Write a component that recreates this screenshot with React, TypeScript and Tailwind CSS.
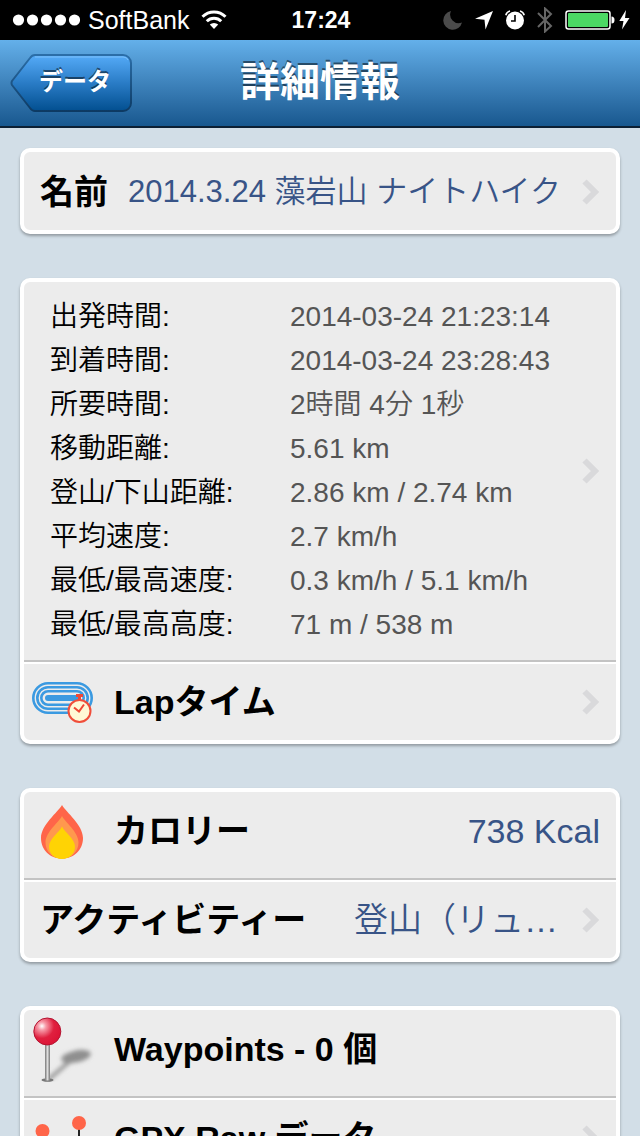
import type { ReactNode } from 'react'

const details = [
  { label: '出発時間:', value: '2014-03-24 21:23:14' },
  { label: '到着時間:', value: '2014-03-24 23:28:43' },
  { label: '所要時間:', value: '2時間 4分 1秒' },
  { label: '移動距離:', value: '5.61 km' },
  { label: '登山/下山距離:', value: '2.86 km / 2.74 km' },
  { label: '平均速度:', value: '2.7 km/h' },
  { label: '最低/最高速度:', value: '0.3 km/h / 5.1 km/h' },
  { label: '最低/最高高度:', value: '71 m / 538 m' },
]

function StatusBar() {
  return (
    <div className="grid h-10 shrink-0 grid-cols-[1fr_auto_1fr] items-center bg-black pr-2.5 pl-3 text-white">
      <div className="flex items-center">
        {/* Signal */}
        <svg width="68" height="12" viewBox="0 0 68 12" fill="currentColor" aria-hidden="true">
          <circle cx="6.5" cy="6" r="5.6" />
          <circle cx="20.5" cy="6" r="5.6" />
          <circle cx="34.5" cy="6" r="5.6" />
          <circle cx="48.5" cy="6" r="5.6" />
          <circle cx="62.5" cy="6" r="5.6" />
        </svg>
        <span className="ml-2 text-[25px] leading-10">SoftBank</span>
        {/* Wi-Fi */}
        <svg className="ml-3" width="26" height="20" viewBox="0 0 26 20" aria-hidden="true">
          <path d="M1.5 6.8a16.3 16.3 0 0 1 23 0" fill="none" stroke="currentColor" strokeWidth="3" />
          <path d="M5.8 11.2a10.2 10.2 0 0 1 14.4 0" fill="none" stroke="currentColor" strokeWidth="3" />
          <path d="M13 19l-4.2-4.4a6 6 0 0 1 8.400 0z" fill="currentColor" />
        </svg>
      </div>
      <span className="text-[23px] font-bold leading-10">17:24</span>
      <div className="flex items-center justify-end">
        {/* Do not disturb */}
        <svg width="20" height="20" viewBox="0 0 20 20" aria-hidden="true">
          <path d="M8 1A9.500 9.500 0 1 0 19 12.600A8.600 8.600 0 0 1 8 1z" fill="#4a4a4a" />
        </svg>
        {/* Location */}
        <svg className="ml-3" width="18" height="19" viewBox="0 0 18 19" fill="currentColor" aria-hidden="true">
          <path d="M18 0L10.500 18.500L9.500 8.700L0 7.700z" />
        </svg>
        {/* Alarm */}
        <svg className="ml-3" width="20" height="20" viewBox="0 0 20 20" aria-hidden="true">
          <circle cx="10" cy="10.500" r="9" fill="currentColor" />
          <path d="M.8 5.200A6 6 0 0 1 5 1M19.200 5.200A6 6 0 0 0 15 1" stroke="currentColor" strokeWidth="1.600" fill="none" />
          <path d="M10 5v6H6" stroke="#000" strokeWidth="1.600" fill="none" />
        </svg>
        {/* Bluetooth */}
        <svg className="ml-3" width="16" height="26" viewBox="0 0 16 26" aria-hidden="true">
          <path d="M1 6l13 13-6 5.500V1.500L14 7 1 20" stroke="#666" strokeWidth="2" fill="none" />
        </svg>
        {/* Battery */}
        <svg className="ml-3" width="50" height="20" viewBox="0 0 50 20" aria-hidden="true">
          <rect x="1" y="1" width="44" height="18" rx="2.500" fill="none" stroke="#fff" strokeWidth="1.500" />
          <rect x="3" y="3" width="40" height="14" rx="1" fill="#4cd964" />
          <path d="M46.500 6.500a3 3.500 0 0 1 0 7z" fill="#fff" />
        </svg>
        <svg className="ml-1" width="11" height="20" viewBox="0 0 11 20" aria-hidden="true">
          <path d="M7 0L.3 11h4.200L3 19.500 10.500 8H6z" fill="#fff" />
        </svg>
      </div>
    </div>
  )
}

function NavBar() {
  return (
    <header className="grid h-22 shrink-0 grid-cols-[1fr_auto_1fr] items-center border-b-2 border-[#0c2034] bg-linear-to-b from-[#64b0ea] to-[#18588f] px-2.5 text-white">
      <button type="button" className="relative h-[58px] w-[122px] pb-0.5 pl-2 text-2xl font-bold">
        <svg className="absolute inset-0" width="122" height="58" viewBox="0 0 122 58" aria-hidden="true">
          <defs>
            <linearGradient id="backFill" x1="0" y1="0" x2="0" y2="1">
              <stop offset="0" stopColor="#55abf8" />
              <stop offset="0.5" stopColor="#2a7cc6" />
              <stop offset="1" stopColor="#024f90" />
            </linearGradient>
            <linearGradient id="backEdge" x1="0" y1="0" x2="0" y2="1">
              <stop offset="0" stopColor="#2b6ea8" />
              <stop offset="1" stopColor="#0d3a63" />
            </linearGradient>
          </defs>
          <path
            d="M25 1h88a8 8 0 0 1 8 8v40a8 8 0 0 1-8 8H25q-3 0-5-3L2 31q-1-2 0-4L20 4q2-3 5-3z"
            fill="url(#backFill)"
            stroke="url(#backEdge)"
            strokeWidth="2"
          />
          <path d="M25 3h88q4 0 5 3" fill="none" stroke="#7cc0fb" strokeWidth="1" />
        </svg>
        <span className="relative [text-shadow:0_-2px_0_rgba(0,0,0,0.5)]">データ</span>
      </button>
      <h1 className="pb-0.5 text-[40px] font-bold leading-[60px] [text-shadow:0_-2px_0_rgba(0,0,0,0.5)]">詳細情報</h1>
    </header>
  )
}

function Card({ children }: { children: ReactNode }) {
  return (
    <section className="divide-y-2 divide-[#c3c3c3] rounded-[10px] border-4 border-white bg-[#ececec] shadow-[0_2px_3px_rgba(0,0,0,0.3)]">
      {children}
    </section>
  )
}

function Chevron() {
  return (
    <svg className="shrink-0" width="18" height="26" viewBox="0 0 18 26" aria-hidden="true">
      <path d="M2.500 2.500L13 13 2.500 23.500" fill="none" stroke="#d9d9db" strokeWidth="6" />
    </svg>
  )
}

function LapIcon() {
  return (
    <svg className="shrink-0" width="64" height="64" viewBox="0 0 64 64" aria-hidden="true">
      <g fill="none" stroke="#3b9ae1" strokeWidth="2.600">
        <rect x="1.300" y="13.300" width="58.400" height="29.400" rx="14.700" />
        <rect x="5.300" y="17.300" width="50.400" height="21.400" rx="10.700" />
        <rect x="9.300" y="21.300" width="42.400" height="13.400" rx="6.700" />
      </g>
      <rect x="13" y="25" width="35" height="6" rx="3" fill="#3b9ae1" />
      <path d="M47.500 26v5" stroke="#ef4836" strokeWidth="3" />
      <path d="M44 25.500h7" stroke="#ef4836" strokeWidth="3" />
      <circle cx="47.500" cy="41" r="11" fill="#fff8d6" stroke="#f04d3a" strokeWidth="2" />
      <path d="M42 37.500l5 4 5-7" fill="none" stroke="#ef4836" strokeWidth="2" />
    </svg>
  )
}

function FlameIcon() {
  return (
    <svg className="shrink-0" width="64" height="64" viewBox="0 0 64 64" aria-hidden="true">
      <path d="M30 6C26 13 9 26 9 39c0 12 9 20.500 21 20.500S51 51 51 39C51 26 34 13 30 6z" fill="#ff6549" />
      <path d="M30 17C27 23 13.500 33 13.500 43.500 13.500 53 21 59.500 30 59.500S46.500 53 46.500 43.500C46.500 33 33 23 30 17z" fill="#ff984e" />
      <path d="M30 27.500C27.500 33 17 40 17 47.500 17 55 22.500 60 30 60S43 55 43 47.500C43 40 32.500 33 30 27.500z" fill="#ffd304" />
    </svg>
  )
}

function PinIcon() {
  return (
    <svg className="shrink-0" width="64" height="66" viewBox="0 0 64 66" aria-hidden="true">
      <defs>
        <radialGradient id="pinHead" cx="0.3" cy="0.3" r="0.75">
          <stop offset="0" stopColor="#fff" />
          <stop offset="0.2" stopColor="#f79aa8" />
          <stop offset="0.6" stopColor="#e0203f" />
          <stop offset="1" stopColor="#dc1436" />
        </radialGradient>
        <linearGradient id="pinStem">
          <stop offset="0" stopColor="#777" />
          <stop offset="0.5" stopColor="#ddd" />
          <stop offset="1" stopColor="#777" />
        </linearGradient>
        <filter id="soft" x="-30%" y="-50%" width="160%" height="200%">
          <feGaussianBlur stdDeviation="2.2" />
        </filter>
      </defs>
      <g filter="url(#soft)">
        <path d="M16 64L38 45" stroke="#999" strokeWidth="4" />
        <ellipse cx="44" cy="40.500" rx="15" ry="6" fill="#8f8f8f" transform="rotate(-12 44 40.500)" />
      </g>
      <ellipse cx="15.500" cy="64" rx="6" ry="1.800" fill="#777" />
      <rect x="13" y="27" width="5" height="37.500" fill="url(#pinStem)" />
      <circle cx="15.300" cy="15.500" r="13.500" fill="url(#pinHead)" stroke="#b3122f" strokeWidth="1" />
    </svg>
  )
}

function TrackIcon() {
  return (
    <svg className="shrink-0" width="64" height="64" viewBox="0 0 64 64" aria-hidden="true">
      <path d="M10 25v27l18-9 19 9V17" fill="none" stroke="#222" strokeWidth="2" />
      <circle cx="10.500" cy="25" r="7" fill="#ff6549" />
      <circle cx="47" cy="17" r="7" fill="#ff6549" />
    </svg>
  )
}

export default function App() {
  return (
    <div className="flex h-screen flex-col bg-[#d2dee7] font-['Liberation_Sans','Noto_Sans_CJK_JP',sans-serif] text-black">
      <StatusBar />
      <NavBar />

      <main className="flex-1 space-y-11 overflow-y-auto px-5 pt-5 pb-11 text-[34px] leading-[50px] [scrollbar-width:none]">
        <Card>
          <a href="#name" className="flex h-[78px] items-center px-4 pt-0.5">
            <span className="shrink-0 font-bold">名前</span>
            <span className="ml-5 flex-1 text-[31px] font-[350] whitespace-nowrap text-[#385487]">
              2014.3.24 藻岩山 ナイトハイク
            </span>
            <Chevron />
          </a>
        </Card>

        <Card>
          <a href="#details" className="flex items-center py-[13px] pr-4 pl-[26px]">
            <dl className="flex-1 text-[28px] leading-[44px]">
              {details.map((item) => (
                <div key={item.label} className="grid grid-cols-[240px_1fr]">
                  <dt className="font-[350]">{item.label}</dt>
                  <dd className="font-[350] text-[#555]">{item.value}</dd>
                </div>
              ))}
            </dl>
            <Chevron />
          </a>
          <a href="#lap" className="flex h-[78px] items-center gap-[18px] pt-0.5 pr-4 pl-2 shadow-[inset_0_2px_0_#fff]">
            <LapIcon />
            <span className="flex-1 font-bold">Lapタイム</span>
            <Chevron />
          </a>
        </Card>

        <Card>
          <div className="flex h-22 items-center gap-[18px] pr-4 pb-2 pl-2">
            <FlameIcon />
            <span className="flex-1 font-bold">カロリー</span>
            <span className="text-[#385487]">738 Kcal</span>
          </div>
          <a href="#activity" className="flex h-[78px] items-center px-4 pt-0.5 shadow-[inset_0_2px_0_#fff]">
            <span className="flex-1 font-bold">アクティビティー</span>
            <span className="mr-6 font-[350] text-[#385487]">登山（リュ…</span>
            <Chevron />
          </a>
        </Card>

        <Card>
          <div className="flex h-22 items-center gap-[18px] pr-4 pb-2 pl-2">
            <PinIcon />
            <span className="flex-1 font-bold">Waypoints - 0 個</span>
          </div>
          <a href="#gpx" className="flex h-[78px] items-center gap-[18px] pt-0.5 pr-4 pl-2 shadow-[inset_0_2px_0_#fff]">
            <TrackIcon />
            <span className="flex-1 font-bold">GPX Raw データ</span>
            <Chevron />
          </a>
        </Card>
      </main>
    </div>
  )
}
